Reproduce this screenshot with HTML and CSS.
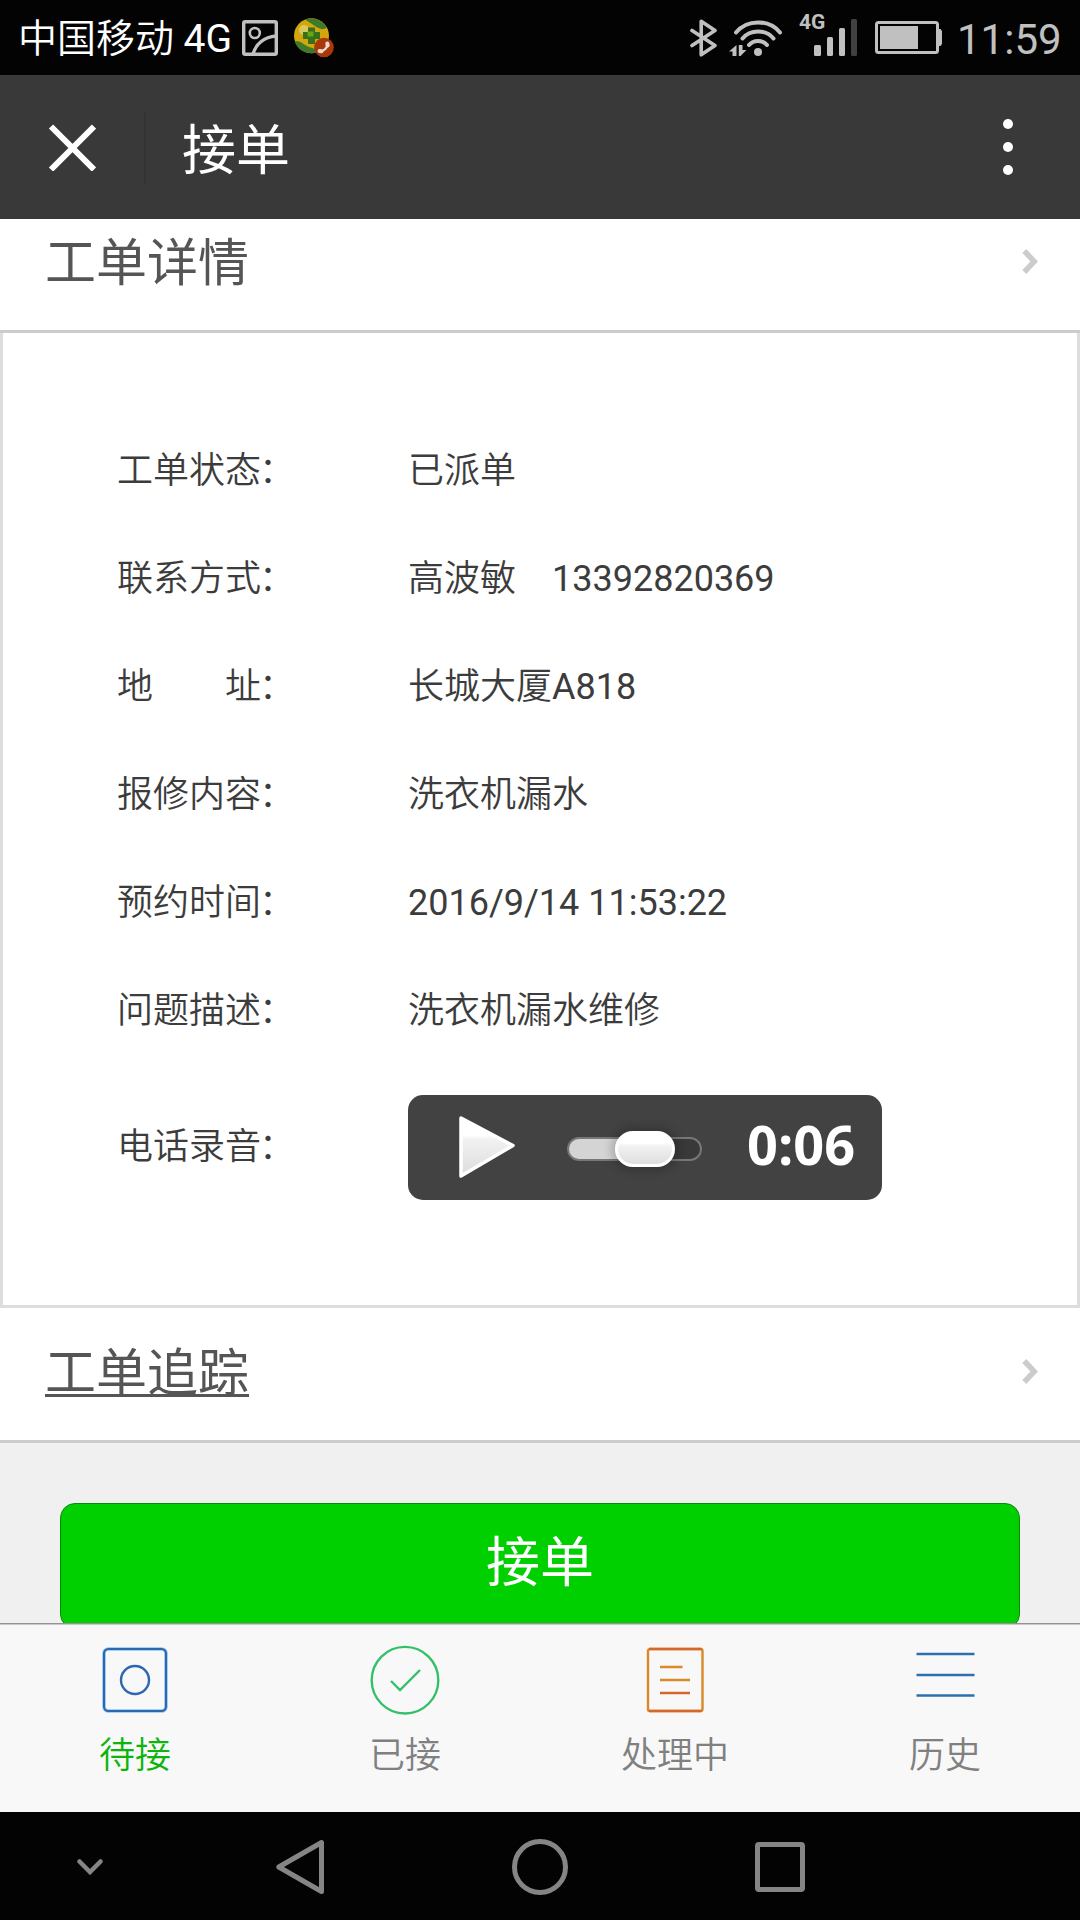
FILE: index.html
```html
<!DOCTYPE html>
<html lang="zh-CN">
<head>
<meta charset="utf-8">
<title>接单</title>
<link rel="stylesheet" href="styles.css">
</head>
<body>
<div class="screen">
  <header class="status">
    <span class="carrier">中国移动 <span class="num">4G</span></span>
    <svg class="ic-shot" width="36" height="36" viewBox="0 0 36 36" fill="none" stroke="#c0c0c0" stroke-width="3.4"><rect x="1.7" y="1.7" width="32.6" height="32.6" rx="1.6"/><circle cx="12.8" cy="13" r="5" stroke-width="2.6"/><path d="M11 34C14 24 22 17 34 16"/></svg>
    <svg class="ic-app" width="40" height="40" viewBox="0 0 40 40"><circle cx="17.5" cy="17.8" r="17.5" fill="#d3a60c"/><path d="M11 1.600C18-1.200 28 1.500 32.500 9c-1 3-6 2.500-10 0S16 5 11 1.600zM1 23c6 0 8 3 12 5s8 2 12 5.800C17 37.500 3 34 1 23z" fill="#3c7a2c"/><circle cx="10" cy="12" r="5" fill="#d9c85c"/><path d="M14 9.500h7v4.500h5v7h-5v5h-7v-5H9v-7h5z" fill="#35701c"/><path d="M13.500 13.500h6v5h-6z" fill="#6aa512"/><circle cx="30" cy="29.500" r="9.800" fill="#a83808"/><path d="M25.800 33.300c4.200 0 7.800-3.600 7.800-7.800" fill="none" stroke="#eed8d0" stroke-width="2.400" stroke-linecap="round"/><path d="M25.500 33l2 .3M33.300 25.500l.4 2" stroke="#eed8d0" stroke-width="4" stroke-linecap="round"/></svg>
    <span class="spacer"></span>
    <svg class="ic-bt" width="27" height="38" viewBox="0 0 27 38" fill="none" stroke="#c0c0c0" stroke-width="3.600" stroke-linejoin="round" stroke-linecap="round"><path d="M2 11.500L25 26.500L11.200 35.800V2.200L25 11.500L2 26.500"/></svg>
    <svg class="ic-wifi" width="54" height="38" viewBox="0 0 54 38" fill="none" stroke="#c0c0c0" stroke-width="4" stroke-linecap="round"><path d="M7 13.500C18 0 40 0 51 13.500M13.500 19.500C21 10 37 10 44.500 19.500M20 26C24.500 20.500 33.500 20.500 38 26"/><circle cx="29" cy="33" r="4" fill="#c0c0c0" stroke="none"/><path d="M7.500 26v11H3.500v-4.500H0zM9.800 26h3.700v5H17.500L11.500 37H9.800z" fill="#c0c0c0" stroke="none"/></svg>
    <span class="signal"><span class="net">4G</span><svg width="43" height="37" viewBox="0 0 43 37" fill="#c0c0c0"><rect y="26" width="7" height="11" rx="1.500"/><rect x="13" y="18" width="6" height="19" rx="1.500"/><rect x="25" y="9" width="6" height="28" rx="1.500"/><rect x="37" width="6" height="37" rx="1.500" fill="#404040"/></svg></span>
    <svg class="ic-bat" width="67" height="33" viewBox="0 0 67 33"><rect x="1.500" y="1.500" width="61" height="30" rx="2" fill="none" stroke="#c0c0c0" stroke-width="3"/><path d="M63 8h2.500l1.500 2v13l-1.500 2H63z" fill="#c0c0c0"/><rect x="5" y="5" width="38" height="23" fill="#c0c0c0"/></svg>
    <span class="clock">11:59</span>
  </header>

  <div class="titlebar">
    <svg width="48" height="48" viewBox="0 0 48 48" stroke="#fff" stroke-width="6"><path d="M3 3.500l43 43M46 3.500l-43 43"/></svg>
    <h1 class="title">接单</h1>
    <svg width="10" height="56" viewBox="0 0 10 56" fill="#fff"><circle cx="5" cy="5" r="5"/><circle cx="5" cy="28" r="5"/><circle cx="5" cy="51" r="5"/></svg>
  </div>

  <main class="content">
    <div class="row"><span class="row-title">工单详情</span><svg width="16" height="25" viewBox="0 0 16 25" fill="none" stroke="#ccc" stroke-width="5.500"><path d="M2.300 2l10 10.500L2.300 23"/></svg></div>
    <dl class="panel">
      <div class="field"><dt>工单状态<span class="colon">：</span></dt><dd>已派单</dd></div>
      <div class="field"><dt>联系方式<span class="colon">：</span></dt><dd>高波敏　<span class="num">13392820369</span></dd></div>
      <div class="field"><dt>地　　址<span class="colon">：</span></dt><dd>长城大厦<span class="num">A818</span></dd></div>
      <div class="field"><dt>报修内容<span class="colon">：</span></dt><dd>洗衣机漏水</dd></div>
      <div class="field"><dt>预约时间<span class="colon">：</span></dt><dd class="num">2016/9/14 11:53:22</dd></div>
      <div class="field"><dt>问题描述<span class="colon">：</span></dt><dd>洗衣机漏水维修</dd></div>
      <div class="field field-audio"><dt>电话录音<span class="colon">：</span></dt><dd class="player">
        <svg width="56" height="62" viewBox="0 0 56 62"><defs><linearGradient id="g" x2="0" y2="1"><stop offset=".3" stop-color="#fff"/><stop offset=".36" stop-color="#f2f2f2"/><stop offset="1" stop-color="#dcdcdc"/></linearGradient></defs><path d="M2 2L54 29.500L2 60z" fill="url(#g)" stroke="#fff" stroke-width="3.500" stroke-linejoin="round"/></svg>
        <span class="track"><span class="thumb"></span></span>
        <span class="time">0:06</span>
      </dd></div>
    </dl>
    <div class="row"><span class="row-title linked">工单追踪</span><svg width="16" height="25" viewBox="0 0 16 25" fill="none" stroke="#ccc" stroke-width="5.500"><path d="M2.300 2l10 10.500L2.300 23"/></svg></div>
    <button class="accept">接单</button>
  </main>

  <nav class="tabs">
    <a class="tab active"><svg width="70" height="70" viewBox="0 0 70 70" fill="none" stroke="#2f66b0" stroke-width="2.400"><rect x="4" y="4" width="62" height="62" rx="4.500" stroke="#8ec4ee" stroke-width="3.600"/><rect x="4" y="4" width="62" height="62" rx="4.500" stroke-width="2"/><circle cx="35" cy="35" r="14"/></svg>待接</a>
    <a class="tab"><svg width="70" height="70" viewBox="0 0 70 70" fill="none" stroke="#34c06a" stroke-width="2.400"><circle cx="35" cy="35.200" r="33.300"/><path d="M21 36l9 9L50 25"/></svg>已接</a>
    <a class="tab"><svg width="70" height="70" viewBox="0 0 70 70" fill="none" stroke="#d88a2a" stroke-width="2.400"><rect x="8" y="4" width="54.500" height="62" rx="2"/><path d="M9 4h52.500M9 66h52.500M20 48h30" stroke="#d4682c"/><path d="M20 22h22.500M20 35h30"/></svg>处理中</a>
    <a class="tab"><svg width="70" height="70" viewBox="0 0 70 70" stroke="#2f6fae" stroke-width="2.600"><path d="M6.500 9h58M6.500 30h58M6.500 50.500h58"/></svg>历史</a>
  </nav>

  <footer class="navbar">
    <svg class="nav-down" width="26" height="16" viewBox="0 0 26 16" fill="none" stroke="#858585" stroke-width="4.500" stroke-linecap="round"><path d="M2.500 2.500L13 13L23.500 2.500"/></svg>
    <svg class="nav-back" width="48" height="56" viewBox="0 0 48 56" fill="none" stroke="#858585" stroke-width="5" stroke-linejoin="round"><path d="M2.800 28L45.500 3.500V52.500z"/></svg>
    <svg class="nav-home" width="56" height="56" viewBox="0 0 56 56" fill="none" stroke="#858585" stroke-width="5"><circle cx="28" cy="28" r="25.500"/></svg>
    <svg class="nav-recent" width="50" height="50" viewBox="0 0 50 50" fill="none" stroke="#858585" stroke-width="5"><rect x="2.500" y="2.500" width="45" height="45" rx="1.500"/></svg>
  </footer>
</div>
</body>
</html>
```
FILE: styles.css
```css
* { box-sizing: border-box; margin: 0; padding: 0; }
body { font-family: Roboto, "Noto Sans CJK SC", sans-serif; background: #f0f0f0; }
svg { display: block; flex: none; }
.num { font-weight: 400; }
.screen { width: 1080px; height: 1920px; display: flex; flex-direction: column; overflow: hidden; }

.status { flex: none; height: 75px; padding: 0 18px; display: flex; align-items: center; background: #030303; color: #c0c0c0; }
.carrier { width: 224px; padding-top: 4px; font-size: 39px; line-height: 71px; font-weight: 350; color: #fff; white-space: nowrap; }
.ic-app { margin-left: 16px; }
.spacer { flex: 1; }
.ic-wifi { margin-left: 12px; }
.signal { position: relative; margin-left: 31px; }
.net { position: absolute; left: -15px; top: -9px; font-size: 21px; line-height: 24px; font-weight: 700; }
.ic-bat { margin-left: 18px; }
.clock { width: 105px; padding-top: 5px; margin-left: 15px; font-size: 42px; line-height: 70px; font-weight: 400; white-space: nowrap; }

.titlebar { flex: none; height: 144px; padding: 0 67px 0 48px; display: flex; align-items: center; background: #393939; color: #fff; }
.title { flex: 1; margin-left: 48px; padding: 10px 0 0 36px; border-left: 2px solid #333; font-size: 54px; line-height: 62px; font-weight: 400; }

.content { flex: 1; min-height: 0; overflow: hidden; background: #f0f0f0; }
.content > .row:first-child { margin-top: -21px; }
.row { height: 135px; padding: 0 42px 0 45px; display: flex; align-items: center; justify-content: space-between; background: #fff; border-bottom: 3px solid #ccc; color: #555; }
.row svg { margin-bottom: 6px; }
.row-title { padding-bottom: 1px; font-size: 51px; line-height: 70px; }
.linked { text-decoration: underline; text-decoration-thickness: 3px; text-underline-offset: 3px; text-decoration-skip-ink: none; }

.panel { height: 975px; padding: 84px 0 0 114px; border: 3px solid #ddd; border-top: 0; background: #fff; color: #3c3c3c; font-size: 36px; line-height: 54px; font-weight: 350; }
.field { height: 108px; display: flex; align-items: center; }
dt { width: 291px; }
.colon { margin-left: -2px; }
.field-audio { height: 164px; }
.player { width: 474px; height: 105px; padding-left: 51px; display: flex; align-items: center; border-radius: 15px; background: #424242; color: #fff; }
.track { width: 135px; height: 24px; margin: 3px 45px 0 52px; padding-left: 48px; border-radius: 12px; border: 2px solid #777; background: linear-gradient(90deg, #d4d4d4 50%, #393939 50%); display: flex; align-items: center; }
.thumb { flex: none; width: 60px; height: 36px; border-radius: 18px; border: 3px solid #fff; background: linear-gradient(#fff 30%, #f2f2f2 40%, #dedede); box-shadow: 0 0 10px 4px rgba(0,0,0,.2); margin-left: -2px; }
.time { padding-bottom: 6px; font: 700 54px/60px "Open Sans", sans-serif; }

.accept { display: block; width: 960px; height: 126px; margin: 60px auto 0; padding-bottom: 15px; border: 1.500px solid #0a8a0a; border-radius: 15px; background: #00cf00; color: #fff; font: inherit; font-size: 54px; }

.tabs { flex: none; height: 189px; display: flex; background: #f8f8f8; border-top: 1px solid #929292; box-shadow: inset 0 1px #c8c8c8; }
.tab { flex: 1; padding-top: 21px; display: flex; flex-direction: column; align-items: center; gap: 14px; font-size: 36px; line-height: 54px; font-weight: 350; color: #808080; }
.active { color: #0cb40c; }

.navbar { flex: none; height: 108px; padding: 2px 0 0 77px; display: flex; align-items: center; background: #030303; }
.nav-back { margin-left: 173px; }
.nav-home { margin-left: 188px; }
.nav-recent { margin-left: 187px; }
```
